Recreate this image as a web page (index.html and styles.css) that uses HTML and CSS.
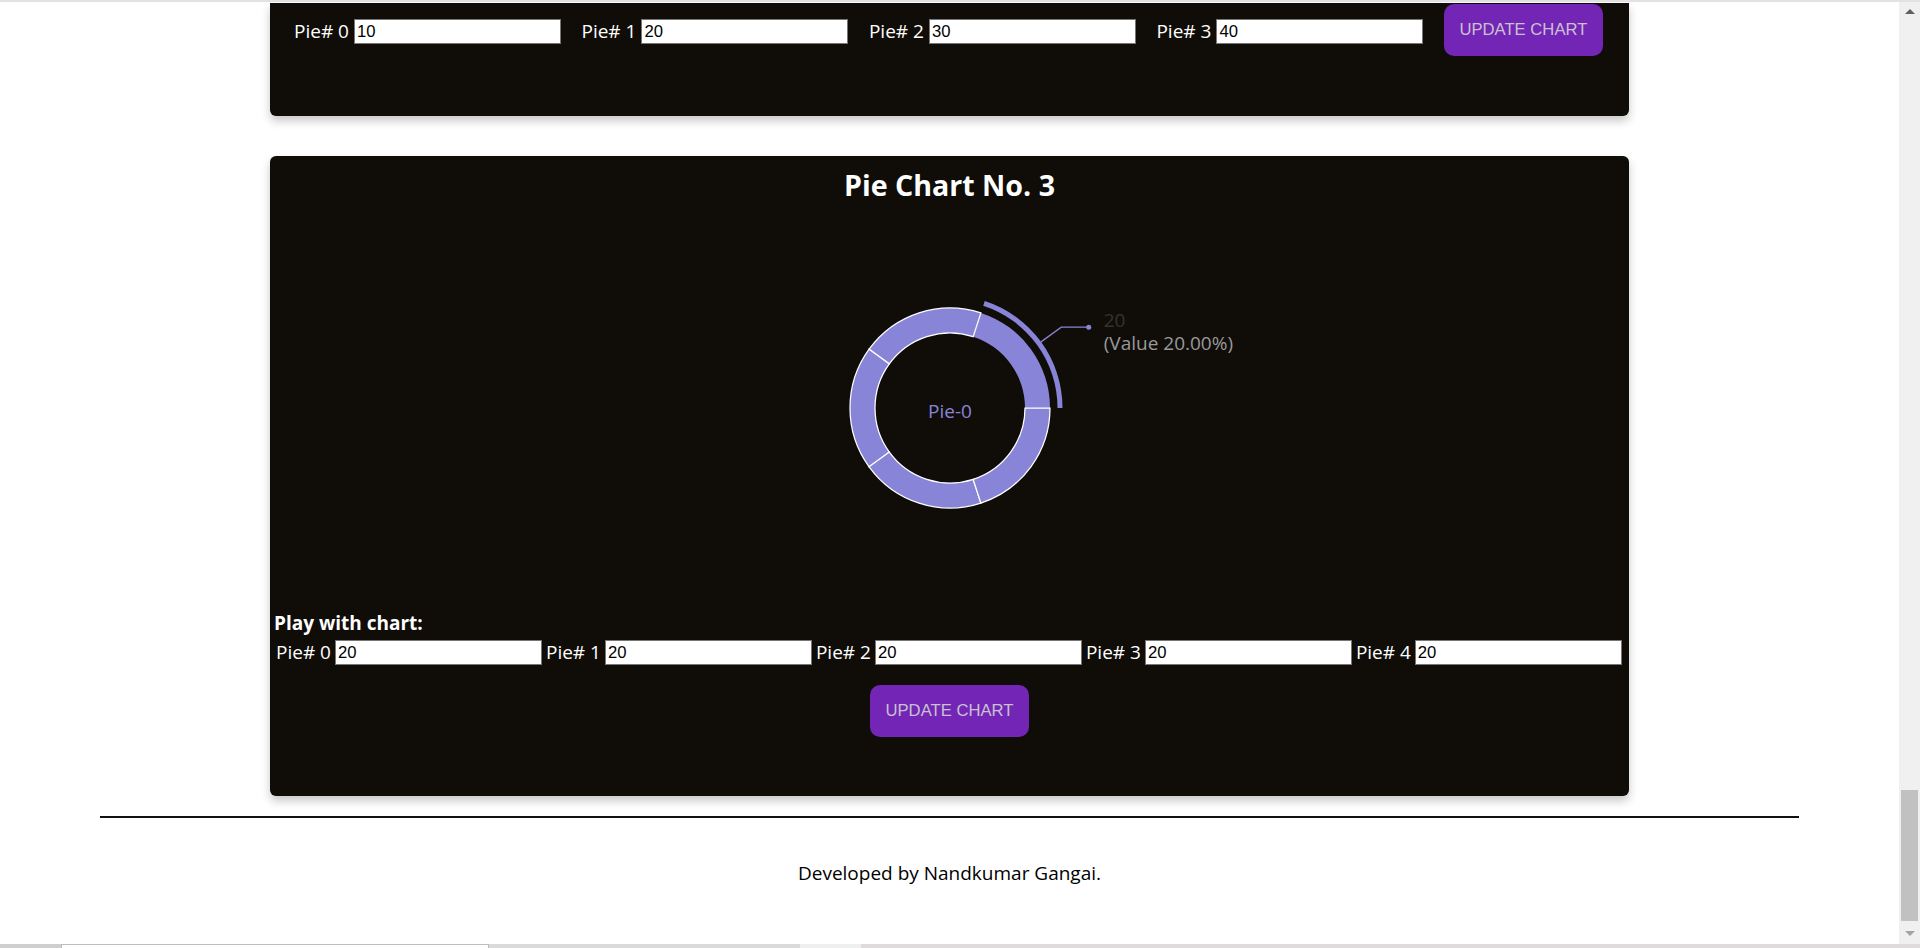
FILE: index.html
```html
<!DOCTYPE html>
<html lang="en">
<head>
<meta charset="utf-8">
<title>Pie Charts</title>
<link rel="stylesheet" href="styles.css">
</head>
<body>
<div class="screen">
  <div class="topline"></div>
  <div class="main">
    <div class="content">
      <section class="card card-cut">
        <div class="row-top">
          <div class="field"><label class="lbl">Pie# 0</label><input class="inp" type="text" value="10"></div>
          <div class="field"><label class="lbl">Pie# 1</label><input class="inp" type="text" value="20"></div>
          <div class="field"><label class="lbl">Pie# 2</label><input class="inp" type="text" value="30"></div>
          <div class="field"><label class="lbl">Pie# 3</label><input class="inp" type="text" value="40"></div>
          <button class="btn" type="button">UPDATE CHART</button>
        </div>
      </section>

      <section class="card card-full">
        <h2 class="title">Pie Chart No. 3</h2>
        <svg class="chart" width="500" height="400" viewBox="0 0 500 400">
          <path class="sec-active" d="M350,200 A100,100 0 0 0 280.902,104.894 L273.176,128.671 A75,75 0 0 1 325,200 Z"/>
          <path class="sec-active" d="M362.5,200 A112.5,112.5 0 0 0 284.765,93.006 L283.220,97.761 A107.5,107.5 0 0 1 357.5,200 Z"/>
          <path class="sec" d="M280.902,104.894 A100,100 0 0 0 169.098,141.221 L189.324,155.916 A75,75 0 0 1 273.176,128.671 Z"/>
          <path class="sec" d="M169.098,141.221 A100,100 0 0 0 169.098,258.779 L189.324,244.084 A75,75 0 0 1 189.324,155.916 Z"/>
          <path class="sec" d="M169.098,258.779 A100,100 0 0 0 280.902,295.106 L273.176,271.329 A75,75 0 0 1 189.324,244.084 Z"/>
          <path class="sec" d="M280.902,295.106 A100,100 0 0 0 350,200 L325,200 A75,75 0 0 1 273.176,271.329 Z"/>
          <path class="leader" d="M341.014,133.874 L361.240,119.180 L388.740,119.180"/>
          <circle class="dot" cx="388.740" cy="119.180" r="2.5"/>
          <text class="c-name" x="250" y="210" text-anchor="middle">Pie-0</text>
          <text class="c-val" x="403.74" y="119.18" text-anchor="start">20</text>
          <text class="c-rate" x="403.74" y="141.68" text-anchor="start">(Value 20.00%)</text>
        </svg>
        <div class="play">Play with chart:</div>
        <div class="row-bottom">
          <div class="field2"><label class="lbl lbl2">Pie# 0</label><input class="inp" type="text" value="20"></div>
          <div class="field2"><label class="lbl lbl2">Pie# 1</label><input class="inp" type="text" value="20"></div>
          <div class="field2"><label class="lbl lbl2">Pie# 2</label><input class="inp" type="text" value="20"></div>
          <div class="field2"><label class="lbl lbl2">Pie# 3</label><input class="inp" type="text" value="20"></div>
          <div class="field2"><label class="lbl lbl2">Pie# 4</label><input class="inp" type="text" value="20"></div>
        </div>
        <div class="btn-wrap"><button class="btn" type="button">UPDATE CHART</button></div>
      </section>

      <hr class="rule">
      <footer class="footer">Developed by Nandkumar Gangai.</footer>
    </div>
    <div class="scrollbar">
      <div class="sb-btn"><span class="tri-up"></span></div>
      <div class="sb-track"><div class="sb-thumb"></div></div>
      <div class="sb-btn sb-btn-down"><span class="tri-down"></span></div>
    </div>
  </div>
  <div class="strip">
    <div class="st-a"></div>
    <div class="st-b"></div>
    <div class="st-c"></div>
    <div class="st-d"></div>
    <div class="st-e"></div>
  </div>
</div>
</body>
</html>
```
FILE: styles.css
```css
* { box-sizing: border-box; }
html, body { margin: 0; padding: 0; }
body {
  background: #ffffff;
  font-family: "Open Sans", "Noto Sans", sans-serif;
  font-size: 19px;
  color: #000;
  overflow: hidden;
}
.screen {
  width: 1920px;
  height: 948px;
  display: flex;
  flex-direction: column;
}
.topline {
  height: 2px;
  background: #e2e2e2;
  flex: none;
}
.main {
  flex: 1;
  display: flex;
  min-height: 0;
}
.content {
  flex: 1;
  min-width: 0;
  overflow: hidden;
}
.card {
  width: 1359px;
  margin: 0 auto;
  background: #100d09;
  color: #ffffff;
  box-shadow: 0 5px 10px rgba(0, 0, 0, 0.22);
}
.card-cut {
  margin-top: 1px;
  height: 113px;
  border-radius: 0 0 6px 6px;
  padding: 1px 24px 0 24px;
}
.row-top {
  display: flex;
  align-items: center;
  gap: 20.5px;
}
.field { display: flex; align-items: center; padding-top: 3px; }
.lbl {
  color: #ffffff;
  line-height: 25px;
  margin-right: 5px;
}
.lbl2 { margin-right: 4px; }
.inp {
  width: 207px;
  height: 25px;
  border: 1px solid #767676;
  padding: 0 2px;
  margin: 0;
  font-family: "Liberation Sans", Arial, sans-serif;
  font-size: 16.67px;
  color: #000;
  background: #fff;
  border-radius: 0;
  outline: none;
}
.btn {
  height: 52px;
  padding: 0 15.5px;
  border: none;
  border-radius: 10px;
  background: #7325b6;
  color: #c9c1d2;
  font-family: "Liberation Sans", Arial, sans-serif;
  font-size: 16.67px;
  line-height: 52px;
  cursor: pointer;
  white-space: nowrap;
}
.card-full {
  margin-top: 40px;
  height: 640px;
  border-radius: 6px;
  padding: 10px 0 0 6px;
}
.title {
  margin: 0;
  text-align: center;
  font-size: 28.6px;
  font-weight: 700;
  line-height: 38px;
  padding-right: 6px;
}
.chart {
  display: block;
  margin: 4px auto 0 auto;
  position: relative;
  left: -3px;
  overflow: visible;
  font-family: "Open Sans", "Noto Sans", sans-serif;
  font-size: 19px;
}
.sec { fill: #8884d8; stroke: #ffffff; stroke-width: 1.25; }
.sec-active { fill: #8884d8; }
.leader { fill: none; stroke: #8884d8; stroke-width: 1.25; }
.dot { fill: #8884d8; }
.c-name { fill: #8884d8; }
.c-val { fill: #333333; }
.c-rate { fill: #999999; }
.play {
  margin-top: 2px;
  font-weight: 700;
  line-height: 26px;
  margin-left: -2px;
}
.row-bottom {
  margin-top: 4px;
  display: flex;
  gap: 4px;
}
.field2 { display: flex; align-items: center; }
.btn-wrap {
  margin-top: 20px;
  display: flex;
  justify-content: center;
  padding-right: 6px;
}
.rule {
  margin: 20px 100px 0 100px;
  border: none;
  height: 2px;
  background: #111;
}
.footer {
  margin-top: 42px;
  text-align: center;
  line-height: 26px;
  color: #000;
}
.scrollbar {
  width: 21px;
  flex: none;
  background: #f0f0f0;
  display: flex;
  flex-direction: column;
}
.sb-btn {
  height: 19px;
  display: flex;
  align-items: center;
  justify-content: center;
  flex: none;
}
.sb-btn-down { height: 21px; }
.tri-up {
  width: 0; height: 0;
  border-left: 5px solid transparent;
  border-right: 5px solid transparent;
  border-bottom: 5px solid #606060;
}
.tri-down {
  width: 0; height: 0;
  border-left: 5px solid transparent;
  border-right: 5px solid transparent;
  border-top: 5px solid #a3a3a3;
}
.sb-track {
  flex: 1;
  display: flex;
  flex-direction: column;
  justify-content: flex-end;
  padding: 0 2px 2px 2px;
}
.sb-thumb {
  height: 131px;
  background: #c1c1c1;
}
.strip {
  height: 4px;
  flex: none;
  display: flex;
}
.st-a { width: 61px; background: #cfcfcf; }
.st-b { width: 428px; background: #ffffff; border-top: 1px solid #bdbdbd; border-left: 1px solid #bdbdbd; border-right: 1px solid #bdbdbd; }
.st-c { width: 311px; background: #dadada; }
.st-d { width: 61px; background: #efefef; }
.st-e { flex: 1; background: #dfdbdd; }
```
